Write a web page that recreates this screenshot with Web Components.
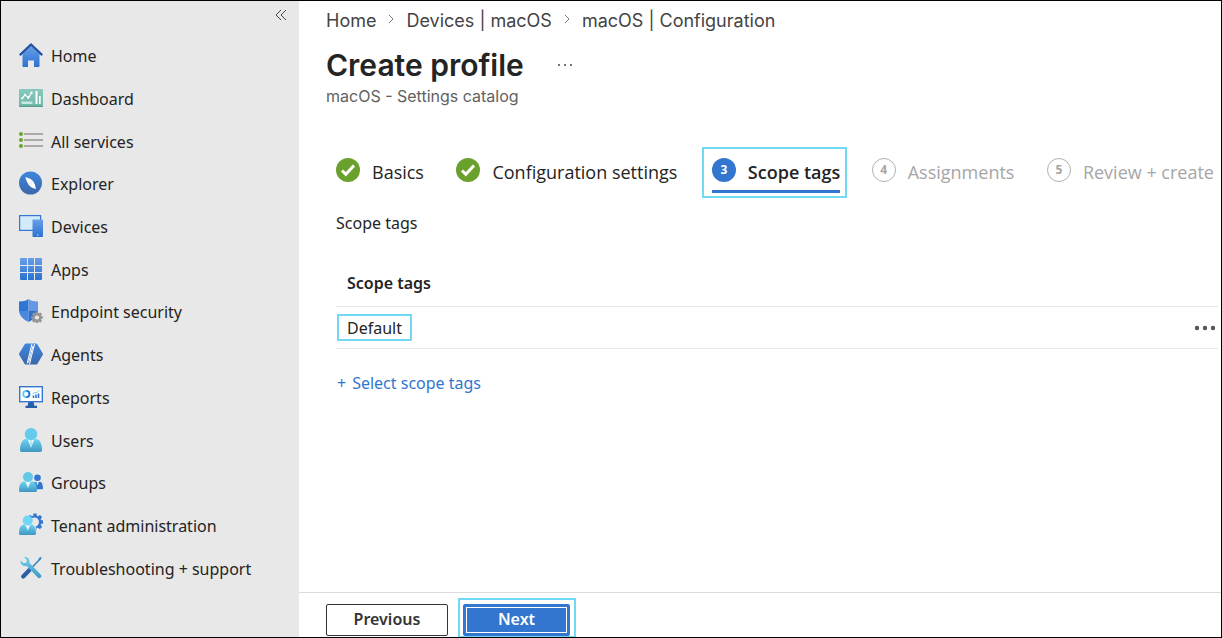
<!DOCTYPE html>
<html lang="en">
<head>
<meta charset="utf-8">
<meta name="viewport" content="width=device-width, initial-scale=1">
<title>Create profile</title>
<style>
  body {
    margin: 0;
    --ui: "Noto Sans", "Open Sans", sans-serif;
    --steps: "Open Sans", "Noto Sans", sans-serif;
    --heading: Inter, Roboto, sans-serif;
    --ink: #242424;
    --accent: #3276cf;
    --focus: #71d9f3;
    font: 16px/24px var(--ui);
    color: var(--ink);
    background: #fff;
  }
</style>
</head>
<body>
<portal-shell>
  <side-nav slot="nav">
    <nav-item icon="home">Home</nav-item>
    <nav-item icon="dashboard">Dashboard</nav-item>
    <nav-item icon="services">All services</nav-item>
    <nav-item icon="explorer">Explorer</nav-item>
    <nav-item icon="devices">Devices</nav-item>
    <nav-item icon="apps">Apps</nav-item>
    <nav-item icon="security">Endpoint security</nav-item>
    <nav-item icon="agents">Agents</nav-item>
    <nav-item icon="reports">Reports</nav-item>
    <nav-item icon="users">Users</nav-item>
    <nav-item icon="groups">Groups</nav-item>
    <nav-item icon="tenant">Tenant administration</nav-item>
    <nav-item icon="tools">Troubleshooting + support</nav-item>
  </side-nav>
  <page-header slot="header" subtitle="macOS - Settings catalog">
    <crumb-link slot="crumbs">Home</crumb-link>
    <crumb-link slot="crumbs">Devices | macOS</crumb-link>
    <crumb-link slot="crumbs">macOS | Configuration</crumb-link>
    Create profile
  </page-header>
  <wizard-steps>
    <wizard-step state="done">Basics</wizard-step>
    <wizard-step state="done">Configuration settings</wizard-step>
    <wizard-step state="current" number="3">Scope tags</wizard-step>
    <wizard-step state="todo" number="4">Assignments</wizard-step>
    <wizard-step state="todo" number="5">Review + create</wizard-step>
  </wizard-steps>
  <scope-tags></scope-tags>
  <wizard-footer slot="footer"></wizard-footer>
</portal-shell>

<script>
const define = (name, markup, setup) => {
  const template = document.createElement('template');
  template.innerHTML = markup;
  customElements.define(name, class extends HTMLElement {
    constructor() {
      super();
      this.attachShadow({ mode: 'open' }).append(template.content.cloneNode(true));
    }
    connectedCallback() {
      if (setup) setup(this, this.shadowRoot);
    }
  });
};

const blueFade = '<linearGradient id="b" x2="0" y2="1"><stop stop-color="#6a9ee8"/><stop offset="1" stop-color="#2b72d0"/></linearGradient>';
const deepFade = '<linearGradient id="d" x2="0" y2="1"><stop stop-color="#3f86df"/><stop offset="1" stop-color="#3b67a8"/></linearGradient>';
const cyanFade = '<linearGradient id="c" x2="0" y2="1"><stop stop-color="#6dd3f2"/><stop offset="1" stop-color="#3f97c2"/></linearGradient>';
const cog = (cx, cy, r, tooth, color, hole) => {
  let teeth = '';
  for (let a = 0; a < 360; a += 45)
    teeth += `<rect x="${cx - tooth / 2}" y="${cy - r}" width="${tooth}" height="${r}" rx=".3" transform="rotate(${a} ${cx} ${cy})"/>`;
  return `<g fill="${color}">${teeth}<circle cx="${cx}" cy="${cy}" r="${r * .76}"/></g><circle cx="${cx}" cy="${cy}" r="${r * .36}" fill="${hole}"/>`;
};

const icons = {
  home: `<defs>${blueFade}</defs><path fill="url(#b)" d="M3.5 11 12 3.2 20.500 11V23c0 .6-.4 1-1 1H15v-6.500H9V24H4.500c-.6 0-1-.4-1-1z"/><path fill="#1f559f" d="M12 0 24 11.300l-1.500 1.700L12 3.300 1.500 13 0 11.300z"/>`,
  dashboard: `<defs><linearGradient id="g" x2="0" y2="1"><stop stop-color="#86c9bd"/><stop offset=".9" stop-color="#74b8ac"/><stop offset="1" stop-color="#4c9488"/></linearGradient></defs><rect y="3" width="24" height="18" rx=".7" fill="url(#g)"/><path d="M3 12.500 6 8.800l3.500 3 3-5" fill="none" stroke="#fff" stroke-width="1.200"/><g fill="#fff"><circle cx="3.200" cy="12.300" r="1.100"/><circle cx="6" cy="8.800" r="1.100"/><circle cx="9.300" cy="11.700" r="1.100"/><circle cx="12.500" cy="6.800" r="1.200"/><rect x="16.500" y="5" width="2" height="13"/><rect x="20" y="10" width="1.700" height="8"/></g><rect x="2.500" y="15.500" width="11" height="2.500" fill="#c9e8e2"/>`,
  services: `<g fill="#6da52c"><circle cx="2" cy="5" r="2"/><circle cx="2" cy="11" r="2"/><circle cx="2" cy="17" r="2"/></g><path d="M5 5h19M5 11h19M5 17h19" stroke="#949494" stroke-width="1.600"/>`,
  explorer: `<defs>${deepFade}</defs><circle cx="11.500" cy="12" r="11.500" fill="url(#d)"/><path fill="#fff" d="M6.300 6.200c3.500.4 6.500 1.800 8.200 4.500 1.400 2.300 2 4.900 2.400 7.300-3.500-.7-6.200-2.500-7.700-5-1.300-2.200-2.300-4.500-2.900-6.800z"/><path d="m9.500 12.800 5-2" stroke="#cfe1f7" stroke-width=".8"/>`,
  devices: `<defs>${blueFade}</defs><rect x=".6" y="1.600" width="21" height="14.800" fill="#d3eaf9" stroke="#3276cf" stroke-width="1.200"/><rect x="13.500" y="5.500" width="10.500" height="17.500" rx=".7" fill="url(#b)"/><circle cx="18.700" cy="21" r=".8" fill="#b8dbf6"/>`,
  apps: `<defs>${blueFade}</defs><path fill="url(#b)" d="M2 1h5.500q.5 0 .5.500V8H1V2q0-1 1-1zM9 1h6v7H9zM16 1h6q1 0 1 1v6h-7zM1 9h7v6H1zM9 9h6v6H9zM16 9h7v6h-7zM1 16h7v7H2q-1 0-1-1zM9 16h6v7H9zM16 16h7v6q0 1-1 1h-6z"/>`,
  security: `<path fill="#2f76d3" d="M0 2.500C4 2.500 7 1.800 9.500 0v12H0z"/><path fill="#6697e4" d="M9.500 0C12 1.800 15 2.500 19 2.500V12H9.500z"/><path fill="#4a88de" d="M0 12h9.500v11C4.500 20.500.5 17 0 12z"/><path fill="#2b6fcb" d="M19 12H9.500v11c5-2.500 9-6 9.500-11z"/>${cog(18, 18.500, 5.900, 2.600, '#959595', '#e8e8e8')}`,
  agents: `<defs>${deepFade}</defs><path fill="url(#d)" d="M7 1.500h10c.6 0 1 .2 1.300.7l5.400 9c.4.600.4 1.100 0 1.700l-5.400 9c-.3.500-.7.700-1.300.7H7c-.6 0-1-.2-1.300-.7L.3 12.900c-.4-.6-.4-1.100 0-1.700l5.400-9c.3-.5.700-.7 1.300-.7z"/><path d="M10.800 10.500 13 1.700M10.800 10.500 8.200 21.500M12.600 13.500 10.500 22.300M15.600 2 12.600 13.500M13.900 4 9.600 20.500" stroke="#fff" stroke-width="1"/>`,
  reports: `<path fill="#275ea8" d="M9.500 16h5l.8 4.800H18V23H6.500v-2.200h2.200z"/><rect x=".7" y="1.700" width="22.600" height="15" fill="#fff" stroke="#3276cf" stroke-width="1.400"/><circle cx="7.300" cy="9" r="3.100" fill="none" stroke="#5fcdf0" stroke-width="1.800"/><path d="M7.300 5.900a3.100 3.100 0 0 1 0 6.200" fill="none" stroke="#2d73ce" stroke-width="1.800"/><path d="M14.500 10.500v2.500M17 9.500V13M19.500 8.500V13" stroke="#3276cf" stroke-width="1.600"/><path d="m13.500 9 2.500-1.700 1.500.7L20.500 5" fill="none" stroke="#53bfe8" stroke-width=".8"/>`,
  users: `<defs>${cyanFade}</defs><path fill="url(#c)" d="M1 22c0-6 2-10.500 6-11h10c4 .5 6 5 6 11 0 1-.5 2-1.700 2H2.700C1.500 24 1 23 1 22z"/><path fill="#e6f6fc" d="M8.500 11h7L12 19.500z"/><path fill="#b5e3f5" d="m11.200 13.500h1.600l.5 3.500L12 19.500 10.700 17z"/><circle cx="12" cy="6.200" r="6.200" fill="#64cbea"/>`,
  groups: `<defs>${cyanFade}</defs><circle cx="18.500" cy="7.700" r="3.300" fill="#3276cf"/><path fill="#3276cf" d="M14 12h8c1.500 1 2 4.500 2 6.500 0 .5-.3.800-.8.800H14z"/><path d="M17 11.500h3l-1.500 4z" fill="#d8e9fb"/><path fill="url(#c)" d="M0 20.500c0-5 1.500-8.500 5-9h8.500c3 .5 4.500 4 4.500 9 0 .8-.5 1.500-1.300 1.500H1.300C.5 22 0 21.300 0 20.500z"/><path fill="#e6f6fc" d="M6.300 11.500h5.500L9 18z"/><circle cx="9" cy="7" r="5" fill="#62c8e8"/>`,
  tenant: `<defs>${cyanFade}</defs>${cog(16, 9, 8.500, 3.400, '#3276cf', '#e8e8e8')}<circle cx="15.500" cy="9" r="4.500" fill="#e8e8e8"/><path fill="#e8e8e8" d="M5 11h9c3 1 4 4 4 13H5z"/><path fill="url(#c)" d="M0 20.500c0-5 1.500-8.500 5-9h7.500c3 .5 4.500 4 4.500 9 0 .8-.5 1.500-1.300 1.500H1.300C.5 22 0 21.300 0 20.500z"/><path fill="#e6f6fc" d="M6 11.500h5.500L8.800 17.500z"/><circle cx="8.700" cy="7.500" r="5" fill="#70d6f5"/>`,
  tools: `<defs>${cyanFade}</defs><path d="m21.500 2.500-9 9.500" stroke="#3b82b8" stroke-width="1.600"/><path d="m22.500.8-.3 2-1.700 1.500-1.200-1.200L21 1.300z" fill="#3b82b8"/><path d="m10.500 14-6.300 6.500" stroke="#2a5fa6" stroke-width="4.200" stroke-linecap="round"/><path fill="url(#c)" d="M7 .8c2.700.8 4 3.300 3.300 6l11.500 12c.8.900.7 2-.1 2.800-.9.900-2 .9-2.900 0L7.500 9.700C4.800 10.500 2.300 9.200 1.500 6.500L1.800 4.600l2.800 2.700 2.700-.6.500-2.700L5 1.300z"/>`
};

define('portal-shell', `
  <style>
    :host { display: flex; box-sizing: border-box; min-height: 100vh; border: 1px solid #000; }
    .nav { flex: 0 0 298px; display: flex; background: #e8e8e8; }
    .page { flex: 1; min-width: 0; display: flex; flex-direction: column; }
    main { flex: 1; }
  </style>
  <div class="nav"><slot name="nav"></slot></div>
  <div class="page">
    <slot name="header"></slot>
    <main><slot></slot></main>
    <slot name="footer"></slot>
  </div>`);

define('side-nav', `
  <style>
    :host { flex: 1; display: flex; flex-direction: column; }
    .top { display: flex; justify-content: flex-end; padding: 2px 6px 7px; }
    button { display: grid; place-items: center; width: 24px; height: 24px; padding: 0; border: 0; background: none; color: #444; }
    svg { width: 12px; height: 12px; }
    nav { flex: 1; display: flex; flex-direction: column; padding-bottom: 48px; }
  </style>
  <div class="top"><button type="button" aria-label="Collapse menu">
    <svg viewBox="0 0 12 12" fill="none" stroke="currentColor"><path d="M6 1 1 6l5 5M11 1 6 6l5 5"/></svg>
  </button></div>
  <nav aria-label="Main"><slot></slot></nav>`);

define('nav-item', `
  <style>
    :host { flex: 1; display: flex; min-height: 32px; }
    a { flex: 1; display: flex; align-items: center; gap: 8px; padding-left: 18px; color: inherit; text-decoration: none; white-space: nowrap; }
    svg { flex: none; width: 24px; height: 24px; }
    span { padding-top: 2px; }
  </style>
  <a href="#"><svg viewBox="0 0 24 24" aria-hidden="true"></svg><span><slot></slot></span></a>`,
  (host, root) => { root.querySelector('svg').innerHTML = icons[host.getAttribute('icon')]; });

define('page-header', `
  <style>
    :host { display: block; padding: 8px 27px 0; font-family: var(--heading); }
    nav { display: flex; flex-wrap: wrap; font-size: 18px; line-height: 24px; color: #444; }
    .title { display: flex; align-items: center; gap: 29px; padding-top: 12px; }
    h1 { margin: 0; font-size: 30px; line-height: 40px; font-weight: 600; }
    button { padding: 4px; border: 0; background: none; color: #444; display: flex; }
    svg { width: 16px; height: 4px; }
    p { margin: 0; font-size: 16px; line-height: 22px; color: #616161; }
  </style>
  <nav aria-label="Breadcrumb"><slot name="crumbs"></slot></nav>
  <div class="title"><h1><slot></slot></h1>
    <button type="button" aria-label="More actions"><svg viewBox="0 0 16 4" fill="currentColor"><circle cx="2" cy="2" r="1"/><circle cx="8" cy="2" r="1"/><circle cx="14" cy="2" r="1"/></svg></button>
  </div>
  <p></p>`,
  (host, root) => { root.querySelector('p').textContent = host.getAttribute('subtitle'); });

define('crumb-link', `
  <style>
    :host { display: flex; align-items: center; }
    a { color: inherit; text-decoration: none; }
    svg { width: 6px; height: 10px; margin: 0 12px 4px; }
    :host(:last-of-type) svg { display: none; }
  </style>
  <a href="#"><slot></slot></a>
  <svg viewBox="0 0 6 10" fill="none" stroke="#777" aria-hidden="true"><path d="m1 1 4 4-4 4"/></svg>`);

define('wizard-steps', `
  <style>
    :host { display: flex; justify-content: space-between; flex-wrap: wrap; padding: 40px 7px 0 37px; }
  </style>
  <slot></slot>`);

define('wizard-step', `
  <style>
    :host { display: block; padding-top: 11px; font: 18px/28px var(--steps); white-space: nowrap; }
    a { display: flex; align-items: flex-start; gap: 12px; padding-bottom: 4px; color: inherit; text-decoration: none; }
    .mark { box-sizing: border-box; display: grid; place-items: center; width: 24px; height: 24px; border-radius: 50%; font: 700 12px/22px var(--ui); }
    svg { display: none; width: 24px; height: 24px; }
    :host([state=done]) svg { display: block; }
    :host([state=done]) .mark { background: #6aa12c; }
    :host([state=current]) { margin: 0 -8px; padding: 9px 5px 3px 8px; border: 2px solid var(--focus); font-weight: 600; }
    :host([state=current]) a { border-bottom: 3px solid var(--accent); }
    :host([state=current]) .mark { background: var(--accent); color: #fff; }
    :host([state=todo]) { color: #a6a6a6; }
    :host([state=todo]) .mark { border: 1px solid #b0b0b0; }
  </style>
  <a href="#"><span class="mark"><svg viewBox="0 0 24 24" fill="none" stroke="#fff" stroke-width="3" aria-hidden="true"><path d="m6 12.500 3.800 3.800L18 7.500"/></svg></span><span><slot></slot></span></a>`,
  (host, root) => {
    const number = host.getAttribute('number');
    if (number) root.querySelector('.mark').textContent = number;
  });

define('scope-tags', `
  <style>
    :host { display: block; padding: 13px 3px 0 37px; }
    h2 { margin: 0; font: inherit; }
    table { width: 100%; margin-top: 25px; border-collapse: collapse; }
    th { height: 46px; padding: 0 11px; text-align: left; font-weight: 600; }
    td { height: 41px; padding: 0; }
    tr { border-bottom: 1px solid #e8e8e8; }
    td:last-child { width: 32px; }
    .tag { display: inline-block; margin-left: 1px; padding: 2px 8px 0; border: 2px solid var(--focus); line-height: 21px; }
    td button { display: flex; margin-left: auto; padding: 8px 2px; border: 0; background: none; }
    svg { width: 22px; height: 6px; }
    a { display: inline-flex; gap: 6px; margin: 22px 1px; color: var(--accent); text-decoration: none; }
  </style>
  <h2>Scope tags</h2>
  <table>
    <thead><tr><th scope="col" colspan="2">Scope tags</th></tr></thead>
    <tbody><tr><td><span class="tag">Default</span></td><td>
      <button type="button" aria-label="Row actions"><svg viewBox="0 0 22 6" fill="#555"><circle cx="3" cy="3" r="2.200"/><circle cx="11" cy="3" r="2.200"/><circle cx="19" cy="3" r="2.200"/></svg></button>
    </td></tr></tbody>
  </table>
  <a href="#"><span>+</span> <span>Select scope tags</span></a>`);

define('wizard-footer', `
  <style>
    :host { display: flex; align-items: flex-end; gap: 10px; padding: 5px 27px 0; border-top: 1px solid #dcdcdc; }
    button { box-sizing: border-box; height: 32px; padding: 0 0 2px; border: 1px solid #333; border-radius: 2px; background: #fff; color: #333; font: 600 16px/24px var(--ui); }
    .previous { width: 122px; margin-bottom: 1px; }
    .focus { border: 2px solid var(--focus); border-bottom-width: 1px; padding: 4px 4px 0 3px; }
    .next { display: block; width: 107px; background: var(--accent); border-color: var(--accent); color: #fff; outline: 1px solid #fff; outline-offset: -4px; }
  </style>
  <button class="previous" type="button">Previous</button>
  <div class="focus"><button class="next" type="button">Next</button></div>`);
</script>
</body>
</html>
